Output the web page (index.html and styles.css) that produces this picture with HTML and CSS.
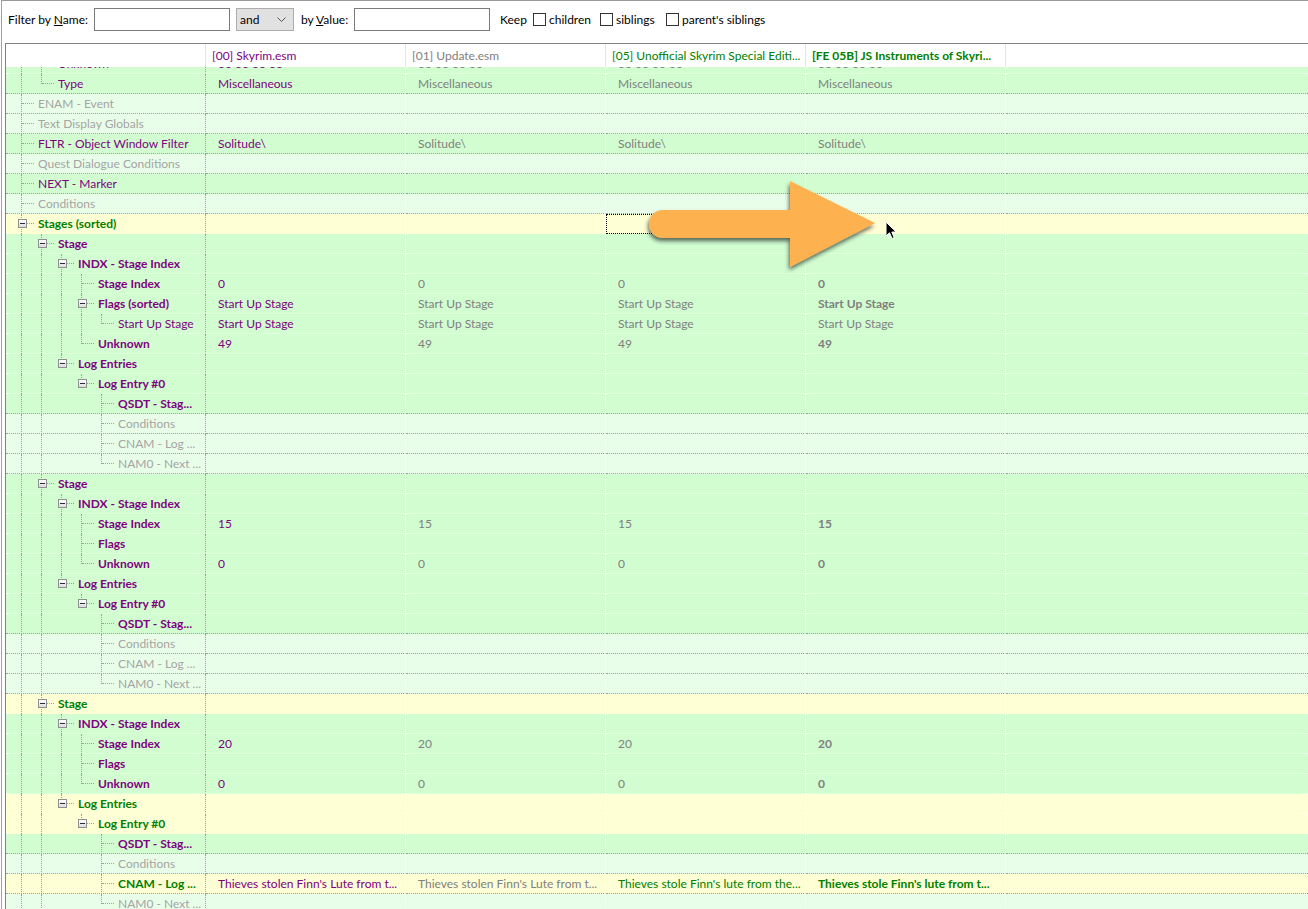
FILE: index.html
```html
<!DOCTYPE html>
<html>
<head>
<meta charset="utf-8">
<title>Quest view</title>
<link rel="stylesheet" href="styles.css">
</head>
<body>
<div class="win">
  <div class="filter">
    <span class="lbl lbl-name">Filter by <u>N</u>ame:</span>
    <input class="inp" type="text">
    <span class="sel">and<svg class="chev" width="9" height="6" viewBox="0 0 9 6"><polyline points="0.5,0.5 4.5,4.5 8.5,0.5" fill="none" stroke="#555" stroke-width="1"/></svg></span>
    <span class="lbl lbl-val">by <u>V</u>alue:</span>
    <input class="inp" type="text">
    <span class="keep">Keep</span>
    <span class="opt opt-children"><span class="cb"></span>children</span>
    <span class="opt opt-siblings"><span class="cb"></span>siblings</span>
    <span class="opt"><span class="cb"></span>parent's siblings</span>
  </div>

  <div class="tree">
    <div class="hdr">
      <div class="h"></div>
      <div class="h hp">[00] Skyrim.esm</div>
      <div class="h hg">[01] Update.esm</div>
      <div class="h hn">[05] Unofficial Skyrim Special Editi...</div>
      <div class="h hn bd">[FE 05B] JS Instruments of Skyri...</div>
      <div class="h last"></div>
    </div>
    <div class="rows">
      <div class="row gr first"><div class="c n p"><span class="g v"></span><span class="g t"></span><span class="lb">Unknown</span></div><div class="c c1">00 00 00 00</div><div class="c c2">00 00 00 00</div><div class="c c3">00 00 00 00</div><div class="c c4">00 00 00 00</div><div class="c f"></div></div>
      <div class="row gr gl"><div class="c n p"><span class="g v"></span><span class="g l"></span><span class="lb">Type</span></div><div class="c c1">Miscellaneous</div><div class="c c2">Miscellaneous</div><div class="c c3">Miscellaneous</div><div class="c c4">Miscellaneous</div><div class="c f"></div></div>
      <div class="row lt gl"><div class="c n gy"><span class="g t"></span><span class="lb">ENAM - Event</span></div><div class="c"></div><div class="c"></div><div class="c"></div><div class="c"></div><div class="c f"></div></div>
      <div class="row lt gl"><div class="c n gy"><span class="g t"></span><span class="lb">Text Display Globals</span></div><div class="c"></div><div class="c"></div><div class="c"></div><div class="c"></div><div class="c f"></div></div>
      <div class="row gr gl"><div class="c n p"><span class="g t"></span><span class="lb">FLTR - Object Window Filter</span></div><div class="c c1">Solitude\</div><div class="c c2">Solitude\</div><div class="c c3">Solitude\</div><div class="c c4">Solitude\</div><div class="c f"></div></div>
      <div class="row lt gl"><div class="c n gy"><span class="g t"></span><span class="lb">Quest Dialogue Conditions</span></div><div class="c"></div><div class="c"></div><div class="c"></div><div class="c"></div><div class="c f"></div></div>
      <div class="row gr gl"><div class="c n p"><span class="g t"></span><span class="lb">NEXT - Marker</span></div><div class="c"></div><div class="c"></div><div class="c"></div><div class="c"></div><div class="c f"></div></div>
      <div class="row lt gl"><div class="c n gy"><span class="g t"></span><span class="lb">Conditions</span></div><div class="c"></div><div class="c"></div><div class="c"></div><div class="c"></div><div class="c f"></div></div>
      <div class="row yl"><div class="c n gn"><span class="g t"><span class="box"></span></span><span class="lb">Stages (sorted)</span></div><div class="c"></div><div class="c"></div><div class="c focus"></div><div class="c"></div><div class="c f"></div></div>

      <div class="row gr"><div class="c n p bd"><span class="g v"></span><span class="g t"><span class="box"></span></span><span class="lb">Stage</span></div><div class="c"></div><div class="c"></div><div class="c"></div><div class="c"></div><div class="c f"></div></div>
      <div class="row gr"><div class="c n p bd"><span class="g v"></span><span class="g v"></span><span class="g t"><span class="box"></span></span><span class="lb">INDX - Stage Index</span></div><div class="c"></div><div class="c"></div><div class="c"></div><div class="c"></div><div class="c f"></div></div>
      <div class="row gr"><div class="c n p bd"><span class="g v"></span><span class="g v"></span><span class="g v"></span><span class="g t"></span><span class="lb">Stage Index</span></div><div class="c c1">0</div><div class="c c2">0</div><div class="c c3">0</div><div class="c c4 bd">0</div><div class="c f"></div></div>
      <div class="row gr"><div class="c n p bd"><span class="g v"></span><span class="g v"></span><span class="g v"></span><span class="g t"><span class="box"></span></span><span class="lb">Flags (sorted)</span></div><div class="c c1">Start Up Stage</div><div class="c c2">Start Up Stage</div><div class="c c3">Start Up Stage</div><div class="c c4 bd">Start Up Stage</div><div class="c f"></div></div>
      <div class="row gr"><div class="c n p"><span class="g v"></span><span class="g v"></span><span class="g v"></span><span class="g v"></span><span class="g l"></span><span class="lb">Start Up Stage</span></div><div class="c c1">Start Up Stage</div><div class="c c2">Start Up Stage</div><div class="c c3">Start Up Stage</div><div class="c c4">Start Up Stage</div><div class="c f"></div></div>
      <div class="row gr"><div class="c n p bd"><span class="g v"></span><span class="g v"></span><span class="g v"></span><span class="g l"></span><span class="lb">Unknown</span></div><div class="c c1">49</div><div class="c c2">49</div><div class="c c3">49</div><div class="c c4 bd">49</div><div class="c f"></div></div>
      <div class="row gr"><div class="c n p bd"><span class="g v"></span><span class="g v"></span><span class="g l"><span class="box"></span></span><span class="lb">Log Entries</span></div><div class="c"></div><div class="c"></div><div class="c"></div><div class="c"></div><div class="c f"></div></div>
      <div class="row gr"><div class="c n p bd"><span class="g v"></span><span class="g v"></span><span class="g"></span><span class="g l"><span class="box"></span></span><span class="lb">Log Entry #0</span></div><div class="c"></div><div class="c"></div><div class="c"></div><div class="c"></div><div class="c f"></div></div>
      <div class="row gr gl"><div class="c n p bd"><span class="g v"></span><span class="g v"></span><span class="g"></span><span class="g"></span><span class="g t"></span><span class="lb">QSDT - Stag...</span></div><div class="c"></div><div class="c"></div><div class="c"></div><div class="c"></div><div class="c f"></div></div>
      <div class="row lt gl"><div class="c n gy"><span class="g v"></span><span class="g v"></span><span class="g"></span><span class="g"></span><span class="g t"></span><span class="lb">Conditions</span></div><div class="c"></div><div class="c"></div><div class="c"></div><div class="c"></div><div class="c f"></div></div>
      <div class="row lt gl"><div class="c n gy"><span class="g v"></span><span class="g v"></span><span class="g"></span><span class="g"></span><span class="g t"></span><span class="lb">CNAM - Log ...</span></div><div class="c"></div><div class="c"></div><div class="c"></div><div class="c"></div><div class="c f"></div></div>
      <div class="row lt gl"><div class="c n gy"><span class="g v"></span><span class="g v"></span><span class="g"></span><span class="g"></span><span class="g l"></span><span class="lb">NAM0 - Next ...</span></div><div class="c"></div><div class="c"></div><div class="c"></div><div class="c"></div><div class="c f"></div></div>

      <div class="row gr"><div class="c n p bd"><span class="g v"></span><span class="g t"><span class="box"></span></span><span class="lb">Stage</span></div><div class="c"></div><div class="c"></div><div class="c"></div><div class="c"></div><div class="c f"></div></div>
      <div class="row gr"><div class="c n p bd"><span class="g v"></span><span class="g v"></span><span class="g t"><span class="box"></span></span><span class="lb">INDX - Stage Index</span></div><div class="c"></div><div class="c"></div><div class="c"></div><div class="c"></div><div class="c f"></div></div>
      <div class="row gr"><div class="c n p bd"><span class="g v"></span><span class="g v"></span><span class="g v"></span><span class="g t"></span><span class="lb">Stage Index</span></div><div class="c c1">15</div><div class="c c2">15</div><div class="c c3">15</div><div class="c c4 bd">15</div><div class="c f"></div></div>
      <div class="row gr"><div class="c n p bd"><span class="g v"></span><span class="g v"></span><span class="g v"></span><span class="g t"></span><span class="lb">Flags</span></div><div class="c"></div><div class="c"></div><div class="c"></div><div class="c"></div><div class="c f"></div></div>
      <div class="row gr"><div class="c n p bd"><span class="g v"></span><span class="g v"></span><span class="g v"></span><span class="g l"></span><span class="lb">Unknown</span></div><div class="c c1">0</div><div class="c c2">0</div><div class="c c3">0</div><div class="c c4 bd">0</div><div class="c f"></div></div>
      <div class="row gr"><div class="c n p bd"><span class="g v"></span><span class="g v"></span><span class="g l"><span class="box"></span></span><span class="lb">Log Entries</span></div><div class="c"></div><div class="c"></div><div class="c"></div><div class="c"></div><div class="c f"></div></div>
      <div class="row gr"><div class="c n p bd"><span class="g v"></span><span class="g v"></span><span class="g"></span><span class="g l"><span class="box"></span></span><span class="lb">Log Entry #0</span></div><div class="c"></div><div class="c"></div><div class="c"></div><div class="c"></div><div class="c f"></div></div>
      <div class="row gr gl"><div class="c n p bd"><span class="g v"></span><span class="g v"></span><span class="g"></span><span class="g"></span><span class="g t"></span><span class="lb">QSDT - Stag...</span></div><div class="c"></div><div class="c"></div><div class="c"></div><div class="c"></div><div class="c f"></div></div>
      <div class="row lt gl"><div class="c n gy"><span class="g v"></span><span class="g v"></span><span class="g"></span><span class="g"></span><span class="g t"></span><span class="lb">Conditions</span></div><div class="c"></div><div class="c"></div><div class="c"></div><div class="c"></div><div class="c f"></div></div>
      <div class="row lt gl"><div class="c n gy"><span class="g v"></span><span class="g v"></span><span class="g"></span><span class="g"></span><span class="g t"></span><span class="lb">CNAM - Log ...</span></div><div class="c"></div><div class="c"></div><div class="c"></div><div class="c"></div><div class="c f"></div></div>
      <div class="row lt gl"><div class="c n gy"><span class="g v"></span><span class="g v"></span><span class="g"></span><span class="g"></span><span class="g l"></span><span class="lb">NAM0 - Next ...</span></div><div class="c"></div><div class="c"></div><div class="c"></div><div class="c"></div><div class="c f"></div></div>

      <div class="row yl"><div class="c n gn"><span class="g v"></span><span class="g t"><span class="box"></span></span><span class="lb">Stage</span></div><div class="c"></div><div class="c"></div><div class="c"></div><div class="c"></div><div class="c f"></div></div>
      <div class="row gr"><div class="c n p bd"><span class="g v"></span><span class="g v"></span><span class="g t"><span class="box"></span></span><span class="lb">INDX - Stage Index</span></div><div class="c"></div><div class="c"></div><div class="c"></div><div class="c"></div><div class="c f"></div></div>
      <div class="row gr"><div class="c n p bd"><span class="g v"></span><span class="g v"></span><span class="g v"></span><span class="g t"></span><span class="lb">Stage Index</span></div><div class="c c1">20</div><div class="c c2">20</div><div class="c c3">20</div><div class="c c4 bd">20</div><div class="c f"></div></div>
      <div class="row gr"><div class="c n p bd"><span class="g v"></span><span class="g v"></span><span class="g v"></span><span class="g t"></span><span class="lb">Flags</span></div><div class="c"></div><div class="c"></div><div class="c"></div><div class="c"></div><div class="c f"></div></div>
      <div class="row gr"><div class="c n p bd"><span class="g v"></span><span class="g v"></span><span class="g v"></span><span class="g l"></span><span class="lb">Unknown</span></div><div class="c c1">0</div><div class="c c2">0</div><div class="c c3">0</div><div class="c c4 bd">0</div><div class="c f"></div></div>
      <div class="row yl"><div class="c n gn"><span class="g v"></span><span class="g v"></span><span class="g l"><span class="box"></span></span><span class="lb">Log Entries</span></div><div class="c"></div><div class="c"></div><div class="c"></div><div class="c"></div><div class="c f"></div></div>
      <div class="row yl"><div class="c n gn"><span class="g v"></span><span class="g v"></span><span class="g"></span><span class="g l"><span class="box"></span></span><span class="lb">Log Entry #0</span></div><div class="c"></div><div class="c"></div><div class="c"></div><div class="c"></div><div class="c f"></div></div>
      <div class="row gr gl"><div class="c n p bd"><span class="g v"></span><span class="g v"></span><span class="g"></span><span class="g"></span><span class="g t"></span><span class="lb">QSDT - Stag...</span></div><div class="c"></div><div class="c"></div><div class="c"></div><div class="c"></div><div class="c f"></div></div>
      <div class="row lt gl"><div class="c n gy"><span class="g v"></span><span class="g v"></span><span class="g"></span><span class="g"></span><span class="g t"></span><span class="lb">Conditions</span></div><div class="c"></div><div class="c"></div><div class="c"></div><div class="c"></div><div class="c f"></div></div>
      <div class="row yl gl"><div class="c n gn"><span class="g v"></span><span class="g v"></span><span class="g"></span><span class="g"></span><span class="g t"></span><span class="lb">CNAM - Log ...</span></div><div class="c c1">Thieves stolen Finn's Lute from t...</div><div class="c c2">Thieves stolen Finn's Lute from t...</div><div class="c c3 green">Thieves stole Finn's lute from the...</div><div class="c c4 green bd">Thieves stole Finn's lute from t...</div><div class="c f"></div></div>
      <div class="row lt gl"><div class="c n gy"><span class="g v"></span><span class="g v"></span><span class="g"></span><span class="g"></span><span class="g l"></span><span class="lb">NAM0 - Next ...</span></div><div class="c"></div><div class="c"></div><div class="c"></div><div class="c"></div><div class="c f"></div></div>
    </div>
  </div>
</div>

<svg class="callout" width="260" height="110" viewBox="0 0 260 110">
  <defs>
    <filter id="sh" x="-20%" y="-20%" width="140%" height="150%">
      <feDropShadow dx="-1" dy="3" stdDeviation="2.2" flood-color="#000" flood-opacity="0.6"/>
    </filter>
  </defs>
  <path d="M34,40 H161 V11 L246,53 L161,97 V68 H34 A14,14 0 0 1 34,40 Z" fill="#fdb150" filter="url(#sh)"/>
</svg>

<svg class="pointer" width="14" height="20" viewBox="0 0 14 20">
  <path d="M1,1 L1,15 L4.5,11.8 L7,17.5 L9.2,16.6 L6.8,11 L11.2,11 Z" fill="#000" stroke="#fff" stroke-width="1" stroke-linejoin="round"/>
</svg>
</body>
</html>
```

FILE: styles.css
```css
html, body {
  margin: 0;
  padding: 0;
}
body {
  width: 1308px;
  height: 909px;
  overflow: hidden;
  background: #fff;
  font-family: Lato, "Liberation Sans", sans-serif;
  font-size: 12px;
  color: #000;
  position: relative;
}

.win {
  margin-left: 1px;
  border-left: 1px solid #a0a0a0;
  border-top: 1px solid #9a9a9a;
  height: 908px;
  display: flex;
  flex-direction: column;
}

/* filter bar */
.filter {
  height: 42px;
  box-sizing: border-box;
  padding: 7px 0 0 6px;
  display: flex;
  align-items: flex-start;
  flex-wrap: nowrap;
}
.filter > * {
  flex: none;
}
.lbl, .keep, .opt, .sel {
  height: 23px;
  line-height: 23px;
}
.lbl u {
  text-decoration: underline;
}
.lbl-name {
  width: 86px;
}
.lbl-val {
  width: 53px;
  margin-left: 7px;
}
.inp {
  width: 136px;
  height: 23px;
  box-sizing: border-box;
  border: 1px solid #7a7a7a;
  margin: 0;
  padding: 0 3px;
  background: #fff;
  font: inherit;
  outline: none;
}
.sel {
  width: 58px;
  box-sizing: border-box;
  margin: 0 0 0 6px;
  border: 1px solid #adadad;
  background: #e1e1e1;
  padding-left: 3px;
  display: flex;
  align-items: center;
  justify-content: space-between;
  padding-right: 7px;
}
.chev {
  display: block;
}
.keep {
  margin-left: 10px;
  width: 33px;
}
.opt {
  display: flex;
  align-items: center;
}
.opt-children {
  width: 67px;
}
.opt-siblings {
  width: 66px;
}
.cb {
  width: 13px;
  height: 13px;
  box-sizing: border-box;
  border: 1px solid #333;
  background: #fff;
  margin-right: 3px;
}

/* tree */
.tree {
  margin-left: 3px;
  border-left: 1px solid #828282;
  border-top: 1px solid #828282;
  flex: 1;
  display: flex;
  flex-direction: column;
  min-height: 0;
}
.hdr, .row {
  display: grid;
  grid-template-columns: 200px 200px 200px 200px 200px 1fr;
}
.hdr {
  height: 23px;
  background: #fff;
}
.h {
  border-right: 1px solid #e5e5e5;
  padding-left: 6px;
  line-height: 23px;
  white-space: nowrap;
  overflow: hidden;
}
.h.last {
  border-right: none;
}
.hp { color: #800080; }
.hg { color: #808080; }
.hn { color: #008000; }
.bd { font-weight: bold; }

.rows {
  flex: 1;
  overflow: hidden;
  min-height: 0;
}
.row {
  --line: #ffffff;
  height: 20px;
}
.row.first {
  margin-top: -13px;
}
.row.gl {
  --line: #a0a0a0;
}
.row.gr { background: #d1fdd1; }
.row.lt { background: #e9fee9; }
.row.yl { background: #ffffd6; }

.c {
  box-sizing: border-box;
  height: 20px;
  border-right: 1px dotted #ffffff;
  border-bottom: 1px dotted var(--line);
  padding-left: 12px;
  line-height: 19px;
  white-space: nowrap;
  overflow: hidden;
  position: relative;
}
.c.f {
  border-right: none;
}
.c.n {
  padding-left: 0;
  display: flex;
  border-right-color: #a0a0a0;
  overflow: visible;
}
.c.focus {
  outline: 1px dotted #000;
  outline-offset: -1px;
}

.n.p { color: #800080; }
.n.gy { color: #a4a4a4; }
.n.gn { color: #008000; font-weight: bold; }

.c1 { color: #800080; }
.c2, .c3, .c4 { color: #808080; }
.c.green { color: #008000; }

.lb {
  padding-left: 12px;
  line-height: 19px;
  white-space: nowrap;
}

/* tree guides */
.g {
  position: relative;
  width: 20px;
  flex: none;
}
.g.v::before,
.g.t::before,
.g.l::before {
  content: "";
  position: absolute;
  left: 15px;
  top: 0;
  height: 20px;
  border-left: 1px dotted #a0a0a0;
}
.g.l::before {
  height: 10px;
}
.g.t::after,
.g.l::after {
  content: "";
  position: absolute;
  left: 16px;
  top: 9px;
  width: 12px;
  border-top: 1px dotted #a0a0a0;
}
.box {
  position: absolute;
  left: 12px;
  top: 5px;
  width: 9px;
  height: 9px;
  box-sizing: border-box;
  border: 1px solid #8e8f8f;
  background: linear-gradient(#ffffff, #dcdcdc);
  z-index: 1;
}
.box::after {
  content: "";
  position: absolute;
  left: 1px;
  top: 3px;
  width: 5px;
  height: 1px;
  background: #2a2a3a;
}

/* overlays */
.callout {
  position: absolute;
  left: 629px;
  top: 170px;
}
.pointer {
  position: absolute;
  left: 885px;
  top: 221px;
}
```
